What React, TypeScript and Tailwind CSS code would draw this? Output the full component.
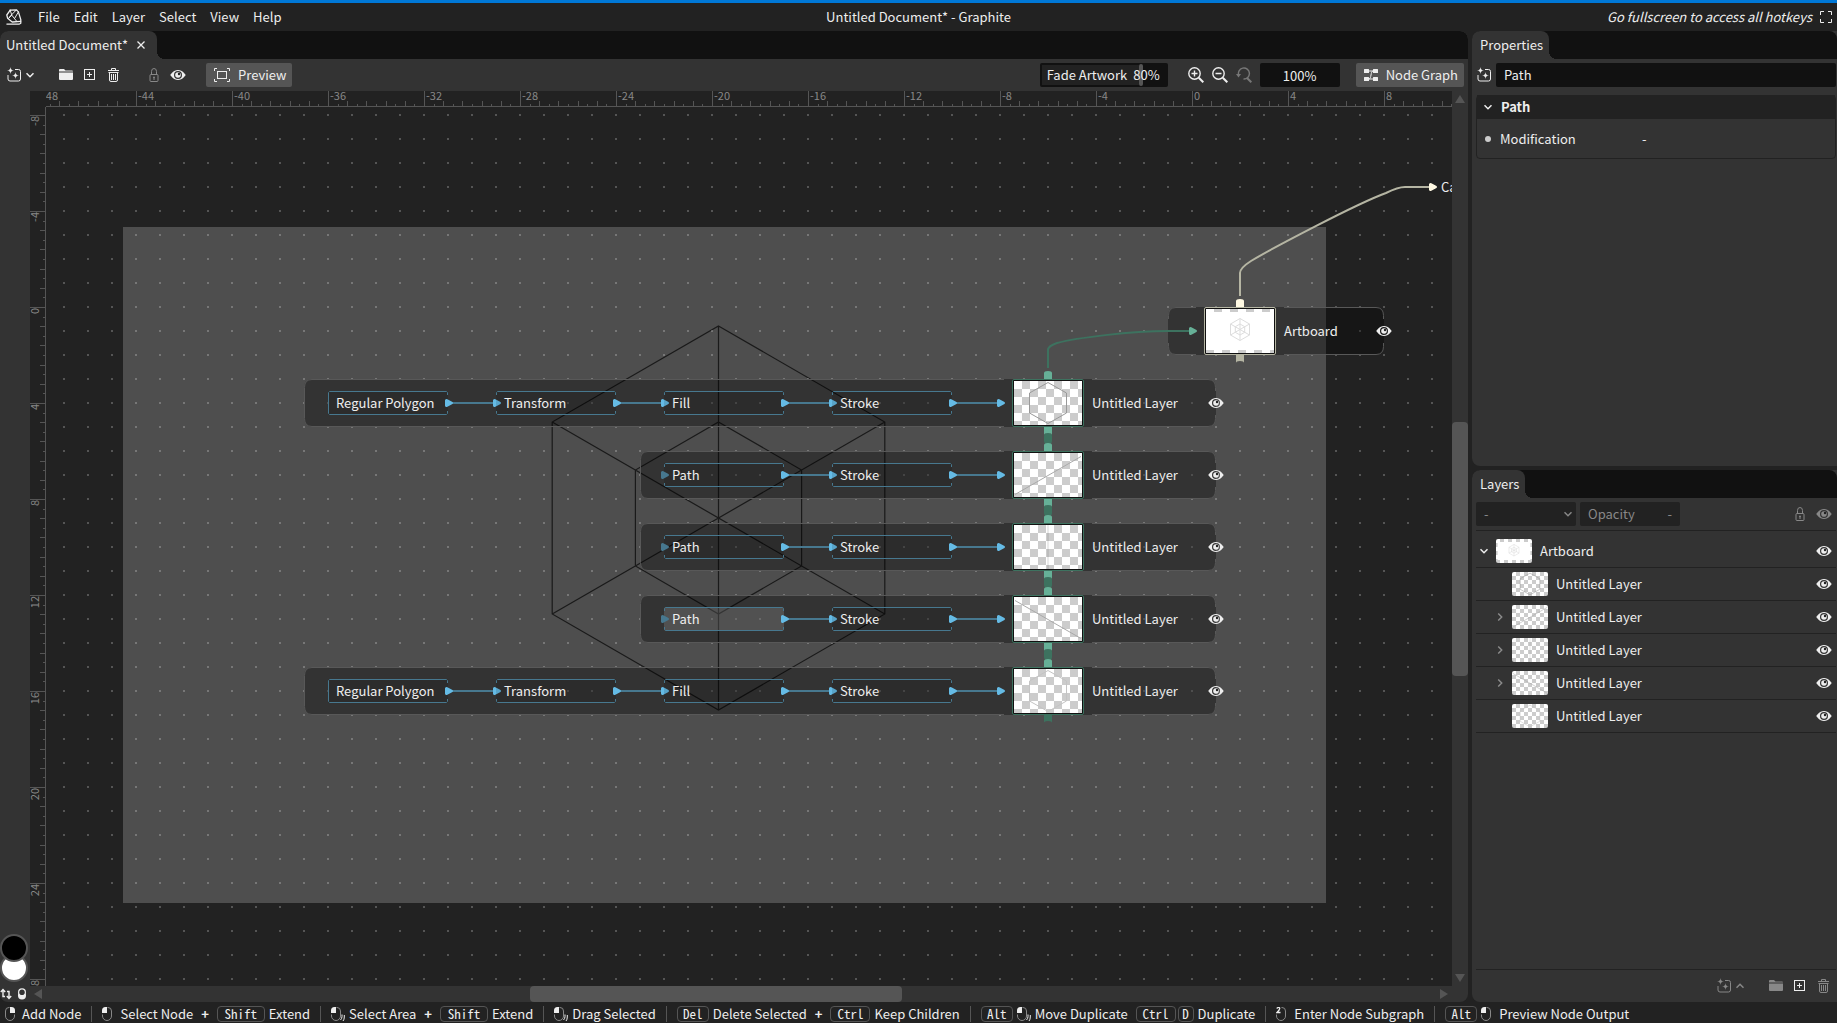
import React from "react";

/* ---------- icons ---------- */

type IconProps = { className?: string };

function Logo() {
  return (
    <svg width="16" height="16" viewBox="0 0 16 16" fill="none" stroke="currentColor" strokeWidth="1.3" strokeLinejoin="round" strokeLinecap="round">
      <path d="M4.2 1.2L10.4.9L12.4 2.9L14.8 10.6V14.2L13 15.2L.9 15.1" />
      <path d="M4.2 1.2L.8 6L1.6 9.2L6.2 13L14.6 12.3" />
      <path d="M4.2 1.2L5.800 6.2L10.3 11.8M12.4 2.9L8.6 9.4M10.4.9L3.2 8.2M2.4 9.6L5.800 6.2" strokeWidth="1" />
    </svg>
  );
}

function FullscreenIcon() {
  return (
    <svg width="12" height="12" viewBox="0 0 12 12" fill="none" stroke="currentColor">
      <path d="M.5 4V.5H4M8 .5H11.5V4M11.5 8V11.5H8M4 11.5H.5V8" />
    </svg>
  );
}

function NewLayerIcon({ className }: IconProps) {
  return (
    <svg className={className} width="16" height="16" viewBox="0 0 16 16" fill="none" stroke="currentColor">
      <path d="M9 2.5H12.5A2 2 0 0 1 14.500 4.500V12A2 2 0 0 1 12.500 14H4A2 2 0 0 1 2 12V8" />
      <path d="M4.500 0C4.700 2.400 5.600 3.300 8 3.500C5.600 3.700 4.700 4.600 4.500 7C4.300 4.600 3.400 3.700 1 3.500C3.400 3.300 4.300 2.400 4.500 0Z" fill="currentColor" stroke="none" />
      <path d="M9.500 5C9.700 7.400 10.600 8.300 13 8.500C10.600 8.700 9.700 9.600 9.500 12C9.300 9.600 8.400 8.700 6 8.500C8.400 8.300 9.300 7.400 9.500 5Z" fill="currentColor" stroke="none" />
    </svg>
  );
}

function Chevron({ className }: IconProps) {
  return (
    <svg className={className} width="8" height="8" viewBox="0 0 8 8" fill="none" stroke="currentColor" strokeWidth="1.500">
      <path d="M.5 2.200L4 5.700L7.500 2.200" />
    </svg>
  );
}

function FolderIcon({ className }: IconProps) {
  return (
    <svg className={className} width="16" height="16" viewBox="0 0 16 16" fill="currentColor">
      <path d="M1 3A1 1 0 0 1 2 2H6L7.500 3.500H14A1 1 0 0 1 15 4.500H1Z" />
      <path d="M1 5.500H15V12A1 1 0 0 1 14 13H2A1 1 0 0 1 1 12Z" />
    </svg>
  );
}

function SquarePlusIcon({ className }: IconProps) {
  return (
    <svg className={className} width="16" height="16" viewBox="0 0 16 16" fill="none" stroke="currentColor">
      <rect x="2.500" y="2.500" width="10" height="10" />
      <path d="M7.500 5V10M5 7.500H10" />
    </svg>
  );
}

function TrashIcon({ className }: IconProps) {
  return (
    <svg className={className} width="16" height="16" viewBox="0 0 16 16" fill="none" stroke="currentColor">
      <path d="M2 3.500H13M5.500 3V1.500H9.500V3M2.500 5.500H12.500M3.500 5.500V13A1.500 1.500 0 0 0 5 14.500H10A1.500 1.500 0 0 0 11.500 13V5.500M5.500 7V13M7.500 7V13M9.500 7V13" />
    </svg>
  );
}

function LockIcon({ className }: IconProps) {
  return (
    <svg className={className} width="16" height="16" viewBox="0 0 16 16" fill="none" stroke="currentColor">
      <rect x="4" y="7.500" width="8" height="7" rx="1" />
      <path d="M5.500 7.500V4.500A2.500 3 0 0 1 10.500 4.500V7.500M8 10V13" />
      <circle cx="8" cy="10.300" r="0.900" fill="currentColor" stroke="none" />
    </svg>
  );
}

function EyeIcon({ className }: IconProps) {
  return (
    <svg className={className} width="16" height="16" viewBox="0 0 16 16">
      <path
        fill="currentColor"
        fillRule="evenodd"
        d="M8 3C3.300 3 .3 8 .3 8S3.300 13 8 13S15.700 8 15.700 8S12.700 3 8 3ZM8 4A4 4 0 1 1 8 12A4 4 0 1 1 8 4Z"
      />
      <circle cx="8" cy="8" r="2.800" fill="currentColor" />
      <circle cx="9" cy="7" r="1.200" fill="#222" />
    </svg>
  );
}

function PreviewIcon() {
  return (
    <svg width="16" height="16" viewBox="0 0 16 16" fill="none" stroke="currentColor">
      <path d="M.5 4V1.500H3M13 1.500H15.500V4M15.500 12V14.500H13M3 14.500H.5V12" />
      <rect x="3.500" y="4.500" width="9" height="7" />
    </svg>
  );
}

function ZoomIcon({ sign, className }: { sign: "in" | "out" | "reset"; className?: string }) {
  return (
    <svg className={className} width="16" height="16" viewBox="0 0 16 16" fill="none" stroke="currentColor">
      {sign === "reset" ? <path d="M2.800 8.500A5.500 5.500 0 1 1 7.500 12" strokeWidth="1.400" /> : <circle cx="6.500" cy="6.500" r="5.700" strokeWidth="1.400" />}
      {sign === "in" && <path d="M6.500 3.500V9.500M3.500 6.500H9.500" strokeWidth="1.400" />}
      {sign === "out" && <path d="M3.500 6.500H9.500" strokeWidth="1.400" />}
      {sign === "reset" && <path d="M0 7H5L2.500 10.500Z" fill="currentColor" stroke="none" />}
      <path d="M10.800 10.800L15.300 15.300" strokeWidth="2" />
    </svg>
  );
}

function NodesIcon() {
  return (
    <svg width="16" height="16" viewBox="0 0 16 16" fill="currentColor">
      <rect x="1" y="2" width="5" height="4" rx="0.500" />
      <rect x="1" y="10" width="5" height="4" rx="0.500" />
      <rect x="10" y="2" width="5" height="4" rx="0.500" />
      <rect x="10" y="10" width="5" height="4" rx="0.500" />
      <path d="M6 4H10M6 12C8.500 12 7.500 4 10 4M6 12H10" fill="none" stroke="currentColor" />
    </svg>
  );
}

function SwapIcon() {
  return (
    <svg width="12" height="12" viewBox="0 0 12 12" fill="none" stroke="currentColor" strokeWidth="1.400">
      <path d="M.8 4L3 1.500L5.200 4M3 2V8.500H5M9 10V3.500H7M6.800 8L9 10.500L11.200 8" />
    </svg>
  );
}

function ResetColorsIcon() {
  return (
    <svg width="10" height="12" viewBox="0 0 10 12">
      <circle cx="5" cy="7.500" r="4" fill="currentColor" />
      <circle cx="5" cy="4.200" r="3.400" fill="#333" stroke="currentColor" strokeWidth="1.200" />
    </svg>
  );
}

function MouseIcon({ kind }: { kind: "left" | "right" | "drag" | "double" }) {
  return (
    <svg width={kind === "drag" ? 14 : 10} height="14" viewBox={kind === "drag" ? "0 0 14 14" : "0 0 10 14"} fill="none" className="shrink-0">
      <path
        d={kind === "right" ? "M4.500 .5H4A3.500 3.500 0 0 0 .5 4V9A4.500 4.500 0 0 0 9.500 9V7.500" : "M5.500 .5H6A3.500 3.500 0 0 1 9.500 4V9A4.500 4.500 0 0 1 .5 9V7.500"}
        stroke="#888"
      />
      {kind === "right" && <path d="M5 0H6.500A3.500 3.500 0 0 1 10 3.500V6H5Z" fill="#eee" />}
      {(kind === "left" || kind === "drag") && <path d="M5 0H3.500A3.500 3.500 0 0 0 0 3.500V6H5Z" fill="#eee" />}
      {kind === "double" && <path d="M.7 1.500Q2.500 -.3 3.600 1Q4.300 2.300 1 5.500H4.500" stroke="#eee" strokeWidth="1.300" />}
      {kind === "drag" && <path d="M11 7.500V9.500Q11 11.500 9.500 13M13.300 8V10Q13.300 12.500 12 14" stroke="#eee" />}
    </svg>
  );
}

/* ---------- shared pieces ---------- */

function IconButton({ label, children, className = "" }: { label: string; children: React.ReactNode; className?: string }) {
  return (
    <button aria-label={label} className={`flex h-6 w-6 shrink-0 items-center justify-center ${className}`}>
      {children}
    </button>
  );
}

function TabBar({ title, closable = false }: { title: string; closable?: boolean }) {
  return (
    <div className="flex h-7 shrink-0 rounded-t-lg bg-[#111]">
      <div className={`relative flex items-center rounded-t-lg bg-[#333] ${closable ? "pl-[6px] pr-3" : "pl-2 pr-[6px]"}`}>
        <span>{title}</span>
        {closable && (
          <button aria-label="Close tab" className="ml-[9px] flex h-4 w-2 items-center">
            <svg width="8" height="8" viewBox="0 0 8 8" stroke="currentColor" strokeWidth="1.300">
              <path d="M.5 .5L7.500 7.500M7.500 .5L.5 7.500" />
            </svg>
          </button>
        )}
        <span className="absolute bottom-0 left-full h-2 w-2 bg-[radial-gradient(circle_at_top_right,transparent_8px,#333_8px)]" />
      </div>
    </div>
  );
}

/* ---------- artwork thumbnails ---------- */

type Art = "artboard" | "hexagon" | "rising" | "vertical" | "falling" | "faintHexagon";

function Thumb({ art, small = false }: { art: Art; small?: boolean }) {
  return (
    <div
      className={`bg-[conic-gradient(#ccc_25%,#fff_0_50%,#ccc_0_75%,#fff_0)] ${small ? "h-6 w-9 shrink-0 overflow-hidden rounded-xs bg-[length:8px_8px]" : "h-11 w-[68px] bg-[length:16px_16px]"}`}
    >
      <svg className="block h-full w-full" viewBox="0 0 68 44" fill="none" stroke="#999">
        {art === "artboard" && (
          <g>
            <rect x={small ? 3 : 0} y={small ? 5 : 3} width={small ? 62 : 68} height={small ? 34 : 38} fill="#fff" stroke="none" />
            <path stroke="#ddd" d="M34 9.500L43.500 15V26L34 31.500L24.500 26V15ZM34 9.500V31.500M24.500 15L43.500 26M43.500 15L24.500 26M34 15L38.700 17.700V23.300L34 26L29.300 23.300V17.700Z" />
          </g>
        )}
        {art === "hexagon" && <path d="M34 1.500L52.500 12V32L34 42.500L15.500 32V12Z" />}
        {art === "faintHexagon" && <path stroke="#c4c4c4" d="M34 1.500L52.500 12V32L34 42.500L15.500 32V12Z" />}
        {art === "rising" && <path stroke="#aaa" d="M1 41.500L67 3.500" />}
        {art === "falling" && <path stroke="#aaa" d="M1 3.500L67 41.500" />}
        {art === "vertical" && <path stroke="#000" strokeOpacity="0.080" strokeWidth="2" d="M34 0V44" />}
      </svg>
    </div>
  );
}

/* ---------- rulers ---------- */

function Ruler({ vertical = false }: { vertical?: boolean }) {
  const origin = vertical ? 200 : 1146;
  const count = vertical ? { from: -20, to: 75 } : { from: -125, to: 80 };
  const ticks = Array.from({ length: count.to - count.from }, (_, i) => i + count.from);
  return (
    <svg className="h-full w-full overflow-visible text-[11px]" aria-hidden>
      {ticks.map((i) => {
        const at = Math.round(origin + i * 9.6);
        const len = i % 10 === 0 ? 15 : i % 2 === 0 ? 5 : 2;
        return vertical ? (
          <rect key={i} x={15 - len} y={at} width={len} height="1" fill="#555" />
        ) : (
          <rect key={i} x={at} y={15 - len} width="1" height={len} fill="#555" />
        );
      })}
      {ticks
        .filter((i) => i % 10 === 0)
        .map((i) => {
          const at = origin + i * 9.6;
          const label = String((i / 10) * 4);
          return vertical ? (
            <text key={i} transform={`translate(9 ${at + 1}) rotate(-90)`} textAnchor="end" fill="#888">
              {label}
            </text>
          ) : (
            <text key={i} x={at + 2} y="9" fill="#888">
              {label}
            </text>
          );
        })}
      {vertical ? <rect x="15" y="0" width="1" height="100%" fill="#555" /> : <rect x="0" y="15" width="100%" height="1" fill="#555" />}
    </svg>
  );
}

/* ---------- node graph ---------- */

type GraphLayer = {
  name: string;
  art: Art;
  y: number;
  left: number;
  thumb: number;
  right: number;
  nodes: { name: string; x: number; selected?: boolean }[];
};

const fullChain = [
  { name: "Regular Polygon", x: 282 },
  { name: "Transform", x: 450 },
  { name: "Fill", x: 618 },
  { name: "Stroke", x: 786 },
];
const pathChain = [
  { name: "Path", x: 618 },
  { name: "Stroke", x: 786 },
];

const layers: GraphLayer[] = [
  { name: "Artboard", art: "artboard", y: 224, left: 1122, thumb: 1158, right: 1338, nodes: [] },
  { name: "Untitled Layer", art: "hexagon", y: 296, left: 258, thumb: 966, right: 1170, nodes: fullChain },
  { name: "Untitled Layer", art: "rising", y: 368, left: 594, thumb: 966, right: 1170, nodes: pathChain },
  { name: "Untitled Layer", art: "vertical", y: 440, left: 594, thumb: 966, right: 1170, nodes: pathChain },
  { name: "Untitled Layer", art: "falling", y: 512, left: 594, thumb: 966, right: 1170, nodes: [{ name: "Path", x: 618, selected: true }, { name: "Stroke", x: 786 }] },
  { name: "Untitled Layer", art: "faintHexagon", y: 584, left: 258, thumb: 966, right: 1170, nodes: fullChain },
];

const BLUE = "#65bbe5";
const BLUE_DIM = "#47788f";
const GREEN = "#66b097";
const GREEN_DIM = "#3d725f";

function Arrow({ x, y, fill }: { x: number; y: number; fill: string }) {
  return (
    <path
      transform={`translate(${x} ${y - 4})`}
      fill={fill}
      d="M0 6.306A1.474 1.474 0 0 0 2.356 7.724L7.028 5.248C8.328 4.561 8.328 3.439 7.028 2.748L2.356 .276A1.474 1.474 0 0 0 0 1.694Z"
    />
  );
}

function Dome({ x, y, height, fill }: { x: number; y: number; height: number; fill: string }) {
  return <path fill={fill} d={`M${x - 4} ${y}V${y - height + 2}Q${x - 4} ${y - height} ${x} ${y - height}Q${x + 4} ${y - height} ${x + 4} ${y - height + 2}V${y}Z`} />;
}

function Socket({ x, y, fill }: { x: number; y: number; fill: string }) {
  return <path fill={fill} d={`M${x - 4} ${y}H${x + 4}V${y + 8}Q${x + 4} ${y + 6} ${x} ${y + 6}Q${x - 4} ${y + 6} ${x - 4} ${y + 8}Z`} />;
}

function layerOutline({ left: l, right: r, thumb: t, y, art }: GraphLayer) {
  const a = y - 23.5;
  const b = y + 23.5;
  const leftSide = art === "artboard" ? `V${y - 12}M${l + 0.5} ${y + 12}` : "";
  return (
    `M${t - 8} ${a}H${l + 8}Q${l + 0.5} ${a} ${l + 0.5} ${a + 8}${leftSide}V${b - 8}Q${l + 0.5} ${b} ${l + 8} ${b}H${t - 8}` +
    `M${t + 80} ${a}H${r - 8}Q${r - 0.5} ${a} ${r - 0.5} ${a + 8}V${y - 12}M${r - 0.5} ${y + 12}V${b - 8}Q${r - 0.5} ${b} ${r - 8} ${b}H${t + 80}`
  );
}

function nodeOutline(x: number, y: number, hasInput: boolean) {
  const l = x + 0.5;
  const r = x + 119.5;
  const a = y - 11.5;
  const b = y + 11.5;
  return hasInput
    ? `M${l} ${y - 8}V${a + 1}L${l + 1} ${a}H${r - 1}L${r} ${a + 1}V${y - 8}M${r} ${y + 8}V${b - 1}L${r - 1} ${b}H${l + 1}L${l} ${b - 1}V${y + 8}`
    : `M${r} ${y - 8}V${a + 1}L${r - 1} ${a}H${l + 1}L${l} ${a + 1}V${b - 1}L${l + 1} ${b}H${r - 1}L${r} ${b - 1}V${y + 8}`;
}

function Graph() {
  return (
    <div className="relative min-w-0 flex-1 overflow-hidden bg-[#222]">
      <svg className="absolute inset-0 h-full w-full" aria-hidden>
        <defs>
          <pattern id="grid" x="17" y="7" width="24" height="24" patternUnits="userSpaceOnUse">
            <rect width="2" height="2" fill="#fff" fillOpacity="0.230" />
          </pattern>
        </defs>
        <rect x="77" y="120" width="1203" height="676" fill="#4e4e4e" />
        <path
          fill="none"
          stroke="#1a1a1a"
          strokeWidth="1.200"
          d="M672.500 219L838.800 315V507L672.500 603L506.200 507V315ZM672.500 315L755.600 363V459L672.500 507L589.400 459V363ZM672.500 219V603M506.200 507L838.800 315M506.200 315L838.800 507"
        />
        <rect width="100%" height="100%" fill="url(#grid)" />
      </svg>

      {layers.map((l) => (
        <div
          key={l.y}
          className="absolute h-12 rounded-lg bg-black/34"
          style={{ left: l.left, top: l.y - 24, width: l.right - l.left }}
        />
      ))}

      <svg className="absolute inset-0 h-full w-full" fill="none" aria-hidden>
        {layers.map((l) => (
          <g key={l.y}>
            <path d={layerOutline(l)} stroke="#585858" />
            {l.nodes.map((n, i) => {
              const next = l.nodes[i + 1]?.x ?? 954;
              const hasInput = n.name !== "Regular Polygon";
              return (
                <g key={n.x}>
                  <rect x={n.x} y={l.y - 12} width="120" height="24" rx="2" fill={n.selected ? "#fff" : "#000"} fillOpacity={n.selected ? 0.15 : 0.12} />
                  <path d={nodeOutline(n.x, l.y, hasInput)} stroke={BLUE_DIM} />
                  <path d={`M${n.x + 124} ${l.y}H${next}`} stroke={BLUE_DIM} strokeWidth="2" />
                  <Arrow x={n.x + 117} y={l.y} fill={BLUE} />
                  {hasInput && i === 0 && <Arrow x={n.x - 3} y={l.y} fill={BLUE_DIM} />}
                  <Arrow x={next - 3} y={l.y} fill={BLUE} />
                </g>
              );
            })}
          </g>
        ))}
        {[296, 368, 440, 512].map((y) => (
          <g key={y}>
            <rect x="998" y={y + 30} width="8" height="11" rx="3" fill={GREEN_DIM} />
            <Socket x={1002} y={y + 24} fill={GREEN} />
            <Dome x={1002} y={y + 24 + 24} height={8} fill={GREEN} />
          </g>
        ))}
        <Dome x={1002} y={272} height={8} fill={GREEN} />
        <Socket x={1002} y={608} fill={GREEN_DIM} />
        <path d="M1002 261V243Q1002 239 1011 236C1030 231 1084 224 1122 224H1144" stroke={GREEN_DIM} strokeWidth="2" />
        <Arrow x={1143} y={224} fill={GREEN} />
        <Dome x={1194} y={200} height={8} fill="#fff9e3" />
        <Socket x={1194} y={248} fill="#b5b5a3" />
        <path d="M1194 189V166Q1194 161 1205 154C1225 142 1310 97 1340 86Q1352 80 1359 80H1384" stroke="#b5b5a3" strokeWidth="2" />
        <Arrow x={1383} y={80} fill="#fff9e3" />
      </svg>

      {layers.map((l) => (
        <React.Fragment key={l.y}>
          {l.nodes.map((n) => (
            <button
              key={n.x}
              className="absolute h-6 w-[120px] pl-2 text-left text-[#eee]"
              style={{ left: n.x, top: l.y - 12 }}
            >
              {n.name}
            </button>
          ))}
          <div
            className="absolute flex h-12 items-center text-[#eee]"
            style={{ left: l.thumb, top: l.y - 24, width: l.right - l.thumb + 12 }}
          >
            <div className={`h-12 w-[72px] rounded-xs border bg-[#111] p-px ${l.art === "artboard" ? "border-[#b5b5a3]" : "border-[#3d725f]"}`}>
              <Thumb art={l.art} />
            </div>
            <span className="ml-2 flex-1">{l.name}</span>
            <IconButton label="Toggle visibility" className="text-[#eee]">
              <EyeIcon />
            </IconButton>
          </div>
        </React.Fragment>
      ))}
      <span className="absolute left-[1395px] top-[72px] text-[#eee]">Canvas</span>
    </div>
  );
}

/* ---------- document panel ---------- */

function DocumentToolbar() {
  return (
    <div className="flex h-8 shrink-0 items-center pl-[2px] pr-1">
      <IconButton label="New layer">
        <NewLayerIcon />
      </IconButton>
      <button aria-label="More options" className="flex h-6 w-2 items-center">
        <Chevron />
      </button>
      <div className="ml-5 flex">
        <IconButton label="Group">
          <FolderIcon />
        </IconButton>
        <IconButton label="Add">
          <SquarePlusIcon />
        </IconButton>
        <IconButton label="Delete">
          <TrashIcon />
        </IconButton>
      </div>
      <div className="ml-4 flex">
        <IconButton label="Lock" className="text-[#888]">
          <LockIcon />
        </IconButton>
        <IconButton label="Visibility">
          <EyeIcon />
        </IconButton>
      </div>
      <button className="ml-4 flex h-6 items-center gap-2 rounded-xs bg-[#555] pl-2 pr-[6px]">
        <PreviewIcon />
        Preview
      </button>
      <label className="relative ml-auto flex h-6 w-32 items-center justify-between rounded-xs bg-[#111] pl-[7px] pr-2">
        <span className="absolute inset-y-0.5 left-0.5 w-[97px] bg-[#222]" />
        <span className="absolute inset-y-px left-[99px] w-1 rounded-xs bg-[#555]" />
        <span className="relative whitespace-nowrap">Fade Artwork</span>
        <input className="relative w-8 min-w-0 bg-transparent text-right outline-none" defaultValue="80%" />
      </label>
      <div className="ml-4 flex">
        <IconButton label="Zoom in">
          <ZoomIcon sign="in" />
        </IconButton>
        <IconButton label="Zoom out">
          <ZoomIcon sign="out" />
        </IconButton>
        <IconButton label="Zoom to 100%" className="text-[#777]">
          <ZoomIcon sign="reset" />
        </IconButton>
      </div>
      <input aria-label="Zoom" className="ml-1 h-6 w-20 rounded-xs bg-[#111] text-center outline-none" defaultValue="100%" />
      <button className="ml-4 flex h-6 items-center gap-[7px] rounded-xs bg-[#555] pl-[7px] pr-[6px]">
        <NodesIcon />
        Node Graph
      </button>
    </div>
  );
}

function DocumentPanel() {
  return (
    <section className="flex min-w-0 flex-1 flex-col overflow-hidden rounded-b-lg rounded-t-lg bg-[#333]">
      <TabBar title="Untitled Document*" closable />
      <DocumentToolbar />
      <div className="flex min-h-0 flex-1">
        <div className="flex w-[30px] shrink-0 flex-col justify-end">
          <div className="relative h-[50px]">
            <button aria-label="Secondary color" className="absolute bottom-0 left-0 h-7 w-7 rounded-full border-2 border-[#555] bg-white" />
            <button aria-label="Primary color" className="absolute left-0 top-[2px] h-7 w-7 rounded-full border-2 border-[#555] bg-black" />
          </div>
          <div className="flex h-5 items-center gap-[5px] pb-1 pt-2">
            <button aria-label="Swap colors">
              <SwapIcon />
            </button>
            <button aria-label="Reset colors">
              <ResetColorsIcon />
            </button>
          </div>
        </div>
        <div className="flex min-w-0 flex-1 flex-col">
          <div className="flex min-h-0 flex-1">
            <div className="flex min-w-0 flex-1 flex-col">
              <div className="h-4 shrink-0 bg-[#222] pl-4">
                <div className="h-4 overflow-x-clip">
                  <Ruler />
                </div>
              </div>
              <div className="flex min-h-0 flex-1">
                <div className="w-4 shrink-0 overflow-y-clip bg-[#222]">
                  <Ruler vertical />
                </div>
                <Graph />
              </div>
            </div>
            <div className="flex w-4 flex-col items-center py-1">
              <svg width="10" height="8" viewBox="0 0 10 8" fill="#555">
                <path d="M0 8L5 0L10 8Z" />
              </svg>
              <div className="flex w-full flex-1 flex-col">
                <div className="flex-[319]" />
                <div className="flex-[254] rounded-sm bg-[#555]" />
                <div className="flex-[298]" />
              </div>
              <svg width="10" height="8" viewBox="0 0 10 8" fill="#555">
                <path d="M0 0L5 8L10 0Z" />
              </svg>
            </div>
          </div>
          <div className="flex h-4 shrink-0 items-center pl-1 pr-5">
            <svg width="8" height="10" viewBox="0 0 8 10" fill="#555">
              <path d="M8 0L0 5L8 10Z" />
            </svg>
            <div className="flex h-full flex-1">
              <div className="flex-[488]" />
              <div className="flex-[372] rounded-sm bg-[#555]" />
              <div className="flex-[538]" />
            </div>
            <svg width="8" height="10" viewBox="0 0 8 10" fill="#555">
              <path d="M0 0L8 5L0 10Z" />
            </svg>
          </div>
        </div>
      </div>
    </section>
  );
}

/* ---------- side panels ---------- */

function PropertiesPanel() {
  return (
    <section className="flex min-h-0 flex-[45_1_0px] flex-col overflow-hidden rounded-lg rounded-r-none bg-[#333]">
      <TabBar title="Properties" />
      <div className="flex h-8 items-center pr-px">
        <IconButton label="Node type">
          <NewLayerIcon />
        </IconButton>
        <input aria-label="Node name" className="h-6 min-w-0 flex-1 rounded-xs bg-[#111] px-2 pb-px outline-none" defaultValue="Path" />
      </div>
      <div className="ml-1 mr-px mt-1 rounded-sm border border-[#222]">
        <button className="-mt-px flex h-6 w-full items-center bg-[#222] pl-[7px] font-bold">
          <Chevron />
          <span className="ml-[9px]">Path</span>
        </button>
        <div className="flex h-[39px] items-center pl-2">
          <span className="h-[6px] w-[6px] rounded-full bg-[#ccc]" />
          <span className="ml-[9px] w-[142px]">Modification</span>
          <span>-</span>
        </div>
      </div>
    </section>
  );
}

const tree: { name: string; art: Art; expand?: "open" | "closed"; root?: boolean }[] = [
  { name: "Artboard", art: "artboard", expand: "open", root: true },
  { name: "Untitled Layer", art: "hexagon" },
  { name: "Untitled Layer", art: "rising", expand: "closed" },
  { name: "Untitled Layer", art: "vertical", expand: "closed" },
  { name: "Untitled Layer", art: "falling", expand: "closed" },
  { name: "Untitled Layer", art: "faintHexagon" },
];

function LayersPanel() {
  return (
    <section className="flex min-h-0 flex-[55_1_0px] flex-col overflow-hidden rounded-lg rounded-r-none bg-[#333]">
      <TabBar title="Layers" />
      <div className="flex h-8 shrink-0 items-center pl-1 pr-px text-[#888]">
        <div className="relative h-6 w-[100px]">
          <select aria-label="Blend mode" className="h-6 w-full appearance-none rounded-xs bg-[#222] pl-2 outline-none">
            <option>-</option>
          </select>
          <Chevron className="pointer-events-none absolute right-1 top-2" />
        </div>
        <label className="ml-1 flex h-6 w-[100px] items-center rounded-xs bg-[#222] px-2">
          Opacity
          <input className="w-4 min-w-0 flex-1 bg-transparent text-right outline-none" defaultValue="-" />
        </label>
        <IconButton label="Lock" className="ml-auto">
          <LockIcon />
        </IconButton>
        <IconButton label="Visibility">
          <EyeIcon />
        </IconButton>
      </div>
      <ul className="ml-1 mr-px min-h-0 flex-1 border-y border-[#222] pt-1">
        {tree.map((row, i) => (
          <li key={i} className={`flex h-[33px] items-center border-b border-[#222] ${row.root ? "pl-1" : "pl-5"}`}>
            {row.expand ? (
              <button aria-label="Expand" className={row.expand === "closed" ? "text-[#888]" : ""}>
                <Chevron className={row.expand === "closed" ? "-rotate-90" : ""} />
              </button>
            ) : (
              <span className="w-2" />
            )}
            <span className="ml-2">
              <Thumb art={row.art} small />
            </span>
            <span className="ml-2 flex-1">{row.name}</span>
            <IconButton label="Toggle visibility">
              <EyeIcon />
            </IconButton>
          </li>
        ))}
      </ul>
      <div className="flex h-8 shrink-0 items-center justify-end pr-px text-[#888]">
        <IconButton label="New layer">
          <NewLayerIcon />
        </IconButton>
        <Chevron className="rotate-180" />
        <IconButton label="Group" className="ml-5">
          <FolderIcon />
        </IconButton>
        <IconButton label="Add" className="text-[#eee]">
          <SquarePlusIcon />
        </IconButton>
        <IconButton label="Delete">
          <TrashIcon />
        </IconButton>
      </div>
    </section>
  );
}

/* ---------- status bar ---------- */

function Key({ children }: { children: string }) {
  const width = children.length === 1 ? "w-4" : children.length === 3 ? "w-8" : children.length === 4 ? "w-10" : "w-12";
  return (
    <kbd className={`flex h-4 shrink-0 items-center justify-center rounded-sm border border-[#555] font-['Noto_Sans_Mono_CJK_SC','Liberation_Mono',monospace] text-[13px] ${width}`}>
      {children}
    </kbd>
  );
}

const Plus = () => <span className="mx-1 font-bold">+</span>;
const Divider = () => <span className="mx-[6px] h-4 w-px bg-[#555]" />;

function StatusBar() {
  return (
    <footer className="flex h-[21px] shrink-0 items-center gap-1 overflow-hidden whitespace-nowrap pl-[5px] pt-[3px]">
      <MouseIcon kind="right" />
      <span className="ml-[3px]">Add Node</span>
      <Divider />
      <MouseIcon kind="left" />
      <span className="ml-1">Select Node</span>
      <Plus />
      <Key>Shift</Key>
      <span>Extend</span>
      <Divider />
      <MouseIcon kind="drag" />
      <span>Select Area</span>
      <Plus />
      <Key>Shift</Key>
      <span>Extend</span>
      <Divider />
      <MouseIcon kind="drag" />
      <span>Drag Selected</span>
      <Divider />
      <Key>Del</Key>
      <span>Delete Selected</span>
      <Plus />
      <Key>Ctrl</Key>
      <span>Keep Children</span>
      <Divider />
      <Key>Alt</Key>
      <MouseIcon kind="drag" />
      <span>Move Duplicate</span>
      <span className="ml-1 flex gap-0.5">
        <Key>Ctrl</Key>
        <Key>D</Key>
      </span>
      <span>Duplicate</span>
      <Divider />
      <MouseIcon kind="double" />
      <span className="ml-1">Enter Node Subgraph</span>
      <Divider />
      <Key>Alt</Key>
      <MouseIcon kind="left" />
      <span className="ml-1">Preview Node Output</span>
    </footer>
  );
}

/* ---------- application ---------- */

export default function App() {
  return (
    <div className="flex h-screen flex-col overflow-hidden bg-[#222] font-['Noto_Sans_CJK_SC','Noto_Sans',sans-serif] text-[13px] leading-4 text-[#eee]">
      <header className="grid h-[31px] shrink-0 grid-cols-[1fr_auto_1fr] items-center border-t-[3px] border-[#0078d7]">
        <nav className="flex items-center pl-[6px]">
          <Logo />
          <div className="ml-[9px] flex">
            {["File", "Edit", "Layer", "Select", "View", "Help"].map((m) => (
              <button key={m} className="h-7 px-[7px]">
                {m}
              </button>
            ))}
          </div>
        </nav>
        <h1>Untitled Document* - Graphite</h1>
        <button className="ml-auto flex items-center gap-2 pr-[5px] italic">
          Go fullscreen to access all hotkeys
          <FullscreenIcon />
        </button>
      </header>
      <main className="flex min-h-0 flex-1 gap-1">
        <DocumentPanel />
        <aside className="flex w-[365px] shrink-0 flex-col gap-1">
          <PropertiesPanel />
          <LayersPanel />
        </aside>
      </main>
      <StatusBar />
    </div>
  );
}
